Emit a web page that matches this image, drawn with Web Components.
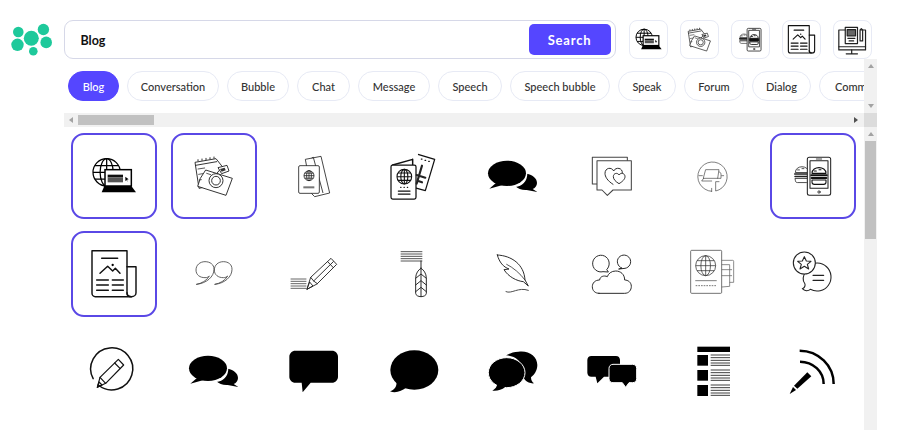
<!doctype html>
<html lang="en"><head><meta charset="utf-8"><title>Icon search</title>
<style>html,body{margin:0;height:430px;overflow:hidden;background:#fff;font-family:Lato,"Liberation Sans",sans-serif}</style>
</head><body>
<icon-app></icon-app>
<script>
const dark={'#888':'#666','#777':'#555','#666':'#444','#555':'#333','#333':'#222'};
const L=(c,w)=>`fill="none" stroke="${dark[c]||c}" stroke-width="${(w*1.25).toFixed(2)}" stroke-linecap="round" stroke-linejoin="round"`;
const W=(c,w)=>`fill="#fff" stroke="${dark[c]||c}" stroke-width="${(w*1.25).toFixed(2)}" stroke-linejoin="round"`;
const globe=(x,y,r,c,w)=>`<g ${W(c,w)}><circle cx="${x}" cy="${y}" r="${r}"/><ellipse cx="${x}" cy="${y}" rx="${r*.48}" ry="${r}" fill="none"/><path d="M${x} ${y-r}V${y+r}M${x-r} ${y}H${x+r}M${x-r*.87} ${y-r*.5}H${x+r*.87}M${x-r*.87} ${y+r*.5}H${x+r*.87}" fill="none"/></g>`;
const burger=(x,y,s,c,w)=>`<g transform="translate(${x} ${y}) scale(${s})" ${L(c,w)}><path d="M-21 -7C-21 -30 21 -30 21 -7Z"/><path d="M-14 -14H-8M0 -18H6" /><path d="M-23 -1H23" stroke-width="${w*2.4}"/><path d="M-22 7H22" stroke-width="${w*2.4}"/><path d="M-21 13H21V20C21 24 18 26 14 26H-14C-18 26 -21 24 -21 20Z"/></g>`;
const duo=`<ellipse cx="441" cy="145" rx="57" ry="38"/><path d="M412 170L388 191L428 180Z"/><path d="M500 146C519 150 531 160 531 174C531 183 525 190 518 192L532 201L500 195C486 196 474 191 466 184C485 182 500 168 500 146Z"/>`;
const ICONS={
1:[33,24,`${globe(140,142,41,'#000',3)}<rect x="135" y="134" width="79" height="49" fill="#fff" stroke="#000" stroke-width="4.5"/><rect x="143" y="149" width="46" height="8" fill="#111"/><rect x="143" y="157" width="46" height="15" fill="#555"/><path d="M196 155l10 8-5 1 2 7-4-6-3 4z"/><path d="M133 183H214L228 202H125Z"/>`],
2:[333,24,`<g ${W('#222',2.2)}><path d="M405 112L468 101L487 125L438 185L417 190Z"/><path d="M474 128l27-7 6 17-22 8z"/><path d="M437 135L517 160L498 211L413 184L421 160Z"/><circle cx="468" cy="167" r="21"/><circle cx="468" cy="167" r="13"/></g><path d="M407 121L470 110M414 108v-4M426 106v-4M438 104v-4M450 102v-4M462 100v-4" ${L('#222',2.2)}/><path d="M414 132L434 129M416 148L428 146M418 165L424 164M440 145L452 149" ${L('#222',1.8)}/><path d="M480 132l14-4 3 8-12 4z" fill="#333"/>`],
3:[633,24,`<g ${W('#333',2)}><path d="M736 103L783 94L809 204L764 215L755 206Z"/><path d="M755 99l5-2 29 107" fill="none"/><rect x="716" y="122" width="62" height="83" rx="4"/></g>${globe(747,152,15,'#222',2)}<rect x="730" y="184" width="33" height="6" fill="#777"/>`],
4:[33,24,`<path d="M158 103L98 120M158 103V120" ${L('#111',3.5)}/><path d="M174 88L224 103L196 197L163 188" ${W('#111',3)}/><rect x="93" y="120" width="75" height="102" rx="5" ${W('#111',3)}/><path d="M184 102h2M195 106h2M206 109h2" ${L('#111',3)}/><path d="M186 122L170 176M170 150L196 158M175 168L186 172" ${L('#333',5)}/>${globe(133,155,22,'#111',2.6)}<path d="M122 187h1M132 187h1M142 187h1" ${L('#111',3)}/><path d="M115 198H150M115 207H150" ${L('#111',3)}/>`],
5:[333,24,`<g fill="#000">${duo}</g><path d="M466 184C485 182 500 168 500 146" ${L('#fff',3)}/>`],
6:[633,24,`<path d="M714 177H700V97H805V107" ${L('#666',2.5)}/><path d="M714 107H817V195H762L745 211L729 195H714Z" ${W('#666',2.5)}/><path d="M762 178C745 167 738 155 738 145C738 128 758 125 764 138C770 125 792 128 790 144" ${L('#333',2.3)}/><path d="M780 176C770 170 763 163 763 155C763 144 776 142 780 150C785 142 798 144 798 155C798 163 790 170 780 176Z" ${W('#333',2.3)}/>`],
7:[33,24,`<path d="M158 199A44 44 0 1 1 170 198V170H180" ${L('#555',1.5)}/><path d="M141 134H180L176 160H134Z" ${L('#555',1.5)}/><path d="M180 140L186 145V160H176M134 160L128 168H158M158 199V190M120 152H130M188 152H194" ${L('#555',1.5)}/>`],
8:[331,24,`${burger(427,148,.95,'#333',2)}<rect x="443" y="97" width="70" height="114" rx="6" ${W('#222',2.5)}/><rect x="451" y="107" width="54" height="83" ${W('#222',2.5)}/><path d="M470 102H486" ${L('#222',2)}/><circle cx="478" cy="201" r="3.5" ${L('#222',2)}/>${burger(478,152,1,'#111',2.6)}`],
9:[33,18,`<path d="M201 125H228V203C228 210 222 215 214 215C206 215 201 210 201 203" ${L('#111',3.5)}/><path d="M96 77H201V203C201 210 206 215 214 215H106C100 215 96 210 96 205Z" ${L('#111',3.5)}/><path d="M125 100H173" ${L('#111',3.5)}/><path d="M120 145L143 124L158 138L166 130L180 145" ${L('#111',3.5)}/><circle cx="158" cy="120" r="3.5"/><path d="M110 165H145M157 165H190M110 180H145M157 180H190M110 196H145M157 196H190" ${L('#111',3.5)}/>`],
10:[333,18,`<path d="M410 178C440 175 462 155 462 133C462 118 450 110 435 110C420 110 408 120 408 135C408 150 420 158 435 158C441 158 445 156 448 153C440 167 425 175 410 178Z" ${L('#666',2)}/><path d="M465 178C495 175 516 155 516 133C516 118 505 110 490 110C475 110 463 120 463 135C463 150 475 158 490 158C496 158 500 156 503 153C495 167 480 175 465 178Z" ${L('#666',2)}/>`],
11:[633,18,`<path d="M693 162H738M693 169H738M693 176H738M693 183H738M693 190H738" ${L('#555',1.8)}/><path d="M741 192L752 157L813 100L830 118L772 176Z" ${L('#333',2.2)}/><path d="M752 157L761 168L772 176M761 168L820 110M803 110L820 128M741 192L749 171L758 182Z" ${L('#333',2.2)}/>`],
12:[33,18,`<path d="M122 80H187M122 87H187M122 94H187M122 101H187M122 108H187" fill="none" stroke="#555" stroke-width="3"/><path d="M183 108V215" ${L('#333',2.3)}/><path d="M183 130C175 134 167 145 167 160V205C167 211 175 215 183 215C191 215 199 211 199 205V160C199 145 191 134 183 130Z" ${L('#333',2.3)}/><path d="M167 160L183 147L199 160M167 180L183 167L199 180M167 200L183 187L199 200" ${L('#333',2.3)}/>`],
13:[333,18,`<path d="M412 90C455 92 492 118 495 165L505 183L490 170C470 168 445 155 432 134L447 132C430 126 418 112 412 90Z" ${L('#333',2.3)}/><path d="M440 118C460 128 480 145 495 165" ${L('#333',1.8)}/><path d="M438 200C455 208 475 185 505 196" ${L('#444',2.3)}/>`],
14:[633,18,`<path d="M744 133A25 25 0 1 0 732 140L747 141Z" ${L('#333',2.3)}/><path d="M788 129A20 20 0 1 1 798 130L780 132Z" ${L('#333',2.3)}/><path d="M720 205H797C810 205 817 195 817 184C817 172 807 165 797 165C797 148 785 138 770 138C757 138 748 146 745 155C735 150 722 155 722 165C708 165 700 174 700 185C700 197 708 205 720 205Z" ${L('#333',2.3)}/>`],
15:[33,24,`<path d="M188 112H221C223 112 224 113 224 115V178H212V190L188 192" ${L('#888',1.8)}/><path d="M188 125H212V178M188 140H218M188 158H218" ${L('#888',1.8)}/><rect x="95" y="82" width="93" height="129" rx="3" ${W('#666',1.8)}/>${globe(140,128,30,'#555',1.8)}<path d="M110 173H172" ${L('#777',1.8)}/><path d="M110 188H172" fill="none" stroke="#444" stroke-width="2.2" stroke-dasharray="5 3"/>`],
16:[331,24,`<path d="M445 130A42 42 0 1 1 452 199C445 205 435 204 428 197C434 195 437 190 436 183C427 172 428 160 440 142" ${W('#333',2.6)}/><circle cx="434" cy="120" r="33" ${W('#333',2.6)}/><path d="M434 101L440 114L454 115L443 124L447 138L434 130L421 138L425 124L414 115L428 114Z" ${L('#333',2.6)}/><path d="M460 157H492M460 172H492" ${L('#333',2.8)}/>`],
17:[33,-3,`<path d="M99.5 146A63 63 0 1 1 115 165" ${L('#111',3.6)}/><path d="M112 172L120 142L175 88L191 105L137 160Z" ${L('#111',2.8)}/><path d="M120 142L137 160M164 99L180 115M112 172L126 165L117 156Z" ${L('#111',2.8)}/>`],
18:[333,-3,`<g fill="#000" transform="translate(3 -30)">${duo}</g><path d="M469 154C488 152 503 138 503 116" ${L('#fff',3)}/>`],
19:[633,-3,`<path d="M706 62H816C826 62 834 70 834 80V140C834 150 826 158 816 158H752L728 187L725 158H706C696 158 688 150 688 140V80C688 70 696 62 706 62Z"/>`],
20:[933,-3,`<ellipse cx="1063" cy="120" rx="72" ry="59"/><path d="M1010 155C1010 170 1003 180 990 184C1005 190 1025 185 1040 172Z"/>`],
21:[33,-3,`<path d="M175 65C205 60 232 78 232 105C232 122 222 135 213 142C213 150 216 156 222 160C212 161 202 157 196 151L180 130C190 100 175 80 138 76C148 70 160 66 175 65Z"/><ellipse cx="140" cy="128" rx="55" ry="45" stroke="#fff" stroke-width="3"/><path d="M112 160C112 170 105 178 97 182C110 184 125 180 135 172Z"/>`],
22:[333,-3,`<path d="M397 78H471C478 78 483 83 483 90V140H435L415 160L410 140H397C390 140 385 135 385 128V90C385 83 390 78 397 78Z"/><path d="M462 103H521C528 103 533 108 533 115V146C533 153 528 158 521 158H510L500 172L490 158H462C455 158 450 153 450 146V115C450 108 455 103 462 103Z" stroke="#fff" stroke-width="3"/>`],
23:[633,-3,`<rect x="715" y="50" width="98" height="16"/><rect x="715" y="75" width="32" height="32"/><rect x="715" y="120" width="32" height="32"/><rect x="715" y="165" width="32" height="33"/><path d="M755 75H813M755 83H813M755 91H813M755 99H813M755 106H813M755 120H813M755 128H813M755 136H813M755 144H813M755 151H813M755 165H813M755 173H813M755 181H813M755 189H813M755 196H813" stroke="#222" stroke-width="2.6" fill="none"/>`],
24:[931,-3,`<path d="M1020 62A102 100 0 0 1 1122 162" fill="none" stroke="#000" stroke-width="7.5"/><path d="M1021 95A71 67 0 0 1 1092 162" fill="none" stroke="#000" stroke-width="7.5"/><path d="M1043 127L1055 139L1013 176L1003 167Z"/><path d="M1000 171L1009 180L990 192Z"/>`],
25:[637,30,`<g ${L('#222',3)}><path d="M672 58H652V120H735V58H720"/><path d="M652 110H735M692 120V130M675 132H710"/><rect x="672" y="50" width="38" height="50"/><rect x="678" y="57" width="26" height="19" fill="#666"/><path d="M680 84H702M684 92H698"/><path d="M718 92V58L722 54L726 58V92Z"/></g>`]
};
function iconSvg(n,px,mode){
  const [ox,oy,raw]=ICONS[n];
  let vb, body=raw;
  if(n===25) vb=`${ox} ${oy} 115 115`;
  else if(mode==='thumb'){ vb=`${ox+36} ${oy+36} 186 186`; body=raw.replace(/stroke-width="([\d.]+)"/g,(m,w)=>`stroke-width="${(w*1.3).toFixed(2)}"`); }
  else vb=`${ox+6} ${oy+6} 246 246`;
  return `<svg xmlns="http://www.w3.org/2000/svg" width="${px}" height="${px}" viewBox="${vb}" aria-hidden="true" style="display:block">${body}</svg>`;
}
const el=(name,css,html)=>customElements.define(name,class extends HTMLElement{
  connectedCallback(){ if(this.shadowRoot) return; const r=this.attachShadow({mode:'open'}); r.innerHTML=`<style>${css}</style>`+(typeof html==='function'?html(this):html);}
});
el('brand-logo',`:host{display:block;width:64px;height:59px}svg{display:block}`,
`<svg width="64" height="59" viewBox="0 0 64 59"><g fill="#1ec99b"><circle cx="18.3" cy="32" r="5.3"/><circle cx="31.3" cy="38.3" r="7.5"/><circle cx="43.4" cy="29.5" r="5.7"/><circle cx="17.5" cy="44.8" r="6.2"/><circle cx="46.2" cy="42.4" r="5.8"/><circle cx="33.3" cy="51.3" r="4.3"/></g></svg>`);
el('search-bar',`:host{display:flex;align-items:center;box-sizing:border-box;width:551.5px;height:39px;border:1.5px solid #d6d8e8;border-radius:9px;padding:0 4px 0 15.5px}
.q{flex:1;font:700 12.5px Lato,"Liberation Sans",sans-serif;color:#111;padding-top:2px}
button{box-sizing:border-box;width:82px;height:30.5px;border:0;border-radius:5px;background:#5546ff;color:#fff;font:700 13px Lato,"Liberation Sans",sans-serif;letter-spacing:.8px;padding:0}`,
`<div class="q"><slot></slot></div><button>Search</button>`);
el('thumb-tile',`:host{display:flex;align-items:center;justify-content:center;box-sizing:border-box;width:39px;height:39px;border:1px solid #e7eaf5;border-radius:8px}`,
t=>iconSvg(+t.getAttribute('icon'),37,'thumb'));
el('tag-pill',`:host{display:flex;align-items:center;justify-content:center;box-sizing:border-box;flex:none;height:30px;border:1px solid #e7eaf5;border-radius:15px;font:500 11px Lato,"Liberation Sans",sans-serif;color:#333}
:host([on]){background:#5546ff;border-color:#5546ff;color:#fff}
:host([clip]){justify-content:flex-start;padding-left:15px}`,`<slot></slot>`);
el('scroll-track',`:host{display:flex;flex:none;background:#f1f1f1;box-sizing:border-box}
:host([v]){flex-direction:column;width:13px;align-items:center}
:host([h]){flex-direction:row;height:14px;align-items:center}
i{display:block;width:0;height:0;flex:none}
.u{border:3.5px solid transparent;border-top:0;border-bottom:4px solid #a3a3a3}
.d{border:3.5px solid transparent;border-bottom:0;border-top:4px solid #a3a3a3}
.l{border:3.5px solid transparent;border-left:0;border-right:4px solid #a3a3a3}
.r{border:3.5px solid transparent;border-right:0;border-left:4px solid #505050}
.t{background:#c1c1c1;flex:none}.s{flex:1}`,
t=>{ if(t.hasAttribute('h')) return `<i class="l" style="margin-left:5px"></i><div class="t" style="width:76px;height:10px;margin-left:5px"></div><div class="s"></div><i class="r" style="margin-right:6px"></i>`;
 const a=+t.getAttribute('thumb')||0;
 return a?`<i class="u" style="margin-top:5px"></i><div class="t" style="width:11px;height:${a}px;margin-top:5px"></div>`
 :`<i class="u" style="margin-top:5px"></i><div class="s"></div><i class="d" style="margin-bottom:5px"></i>`;});
el('scroll-corner',`:host{display:block;width:13px;height:14px;background:#dcdcdc;flex:none}`,``);
el('icon-tile',`:host{display:flex;align-items:center;justify-content:center;box-sizing:border-box;width:86px;height:86px;border:2px solid transparent;border-radius:13px}
:host([on]){border-color:#5a48e6}`,t=>iconSvg(+t.getAttribute('icon'),82,'grid'));
const pills=[['Blog',51,1],['Conversation',92],['Bubble',62],['Chat',53],['Message',72],['Speech',64],['Speech bubble',100],['Speak',58],['Forum',60],['Dialog',59],['Community',80]];
el('icon-app',`:host{display:flex;width:877px;height:430px}
.main{display:flex;flex-direction:column;width:813px}
.top{display:flex;align-items:center;height:39px;padding-top:20px;flex:none}
.thumbs{display:flex;gap:11.9px;margin-left:13.5px}
.tags{display:flex;height:54px;flex:none}
.tagview{flex:1;min-width:0;overflow:hidden;display:flex;gap:8px;padding:12px 0 0 4px;box-sizing:border-box}
.hbar{display:flex;flex:none}.hbar scroll-track{flex:1}
.results{display:flex;flex:1;min-height:0}
.grid{flex:1;display:grid;grid-template-columns:repeat(8,86px);grid-auto-rows:86px;column-gap:13.9px;row-gap:12px;padding:6px 0 0 7px;overflow:hidden;align-content:start}`,
`<brand-logo></brand-logo><div class="main">
<div class="top"><search-bar>Blog</search-bar><div class="thumbs">${[1,2,8,9,25].map(n=>`<thumb-tile icon="${n}"></thumb-tile>`).join('')}</div></div>
<div class="tags"><div class="tagview">${pills.map(([t,w,on])=>`<tag-pill style="width:${w}px" ${on?'on':''} ${t==='Community'?'clip':''}>${t}</tag-pill>`).join('')}</div><scroll-track v></scroll-track></div>
<div class="hbar"><scroll-track h></scroll-track><scroll-corner></scroll-corner></div>
<div class="results"><div class="grid">${Array.from({length:24},(_,i)=>`<icon-tile icon="${i+1}" ${[1,2,8,9].includes(i+1)?'on':''}></icon-tile>`).join('')}</div><scroll-track v thumb="98" style="height:303px"></scroll-track></div>
</div>`);
</script>
</body></html>
